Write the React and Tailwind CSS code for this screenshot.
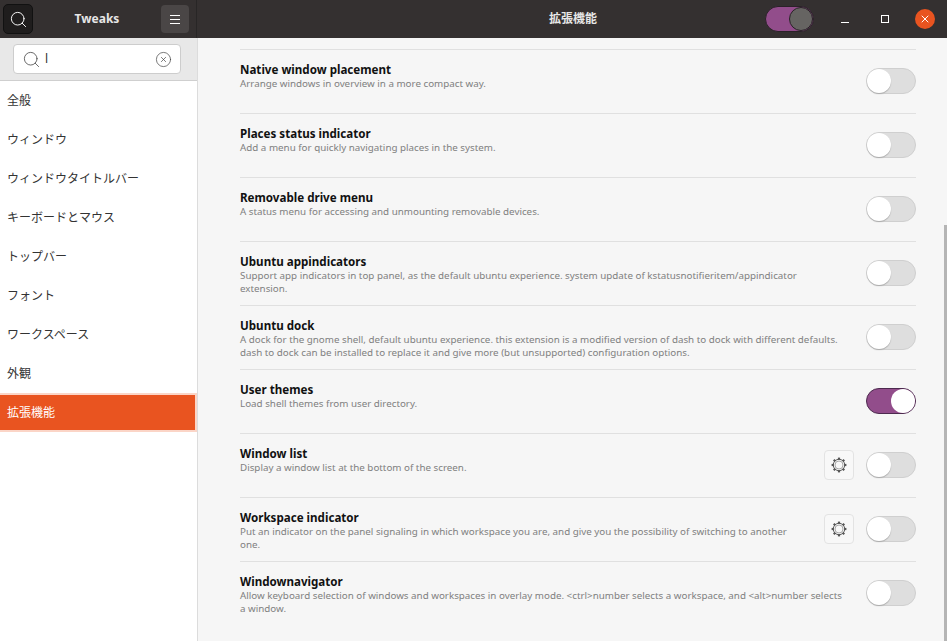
import { Search, CircleX, X } from 'lucide-react'

const navItems = ['全般', 'ウィンドウ', 'ウィンドウタイトルバー', 'キーボードとマウス', 'トップバー', 'フォント', 'ワークスペース', '外観']

const extensions = [
	{ title: 'Native window placement', desc: 'Arrange windows in overview in a more compact way.' },
	{ title: 'Places status indicator', desc: 'Add a menu for quickly navigating places in the system.' },
	{ title: 'Removable drive menu', desc: 'A status menu for accessing and unmounting removable devices.' },
	{
		title: 'Ubuntu appindicators',
		desc: 'Support app indicators in top panel, as the default ubuntu experience. system update of kstatusnotifieritem/appindicator extension.',
	},
	{
		title: 'Ubuntu dock',
		desc: 'A dock for the gnome shell, default ubuntu experience. this extension is a modified version of dash to dock with different defaults. dash to dock can be installed to replace it and give more (but unsupported) configuration options.',
	},
	{ title: 'User themes', desc: 'Load shell themes from user directory.', on: true },
	{ title: 'Window list', desc: 'Display a window list at the bottom of the screen.', gear: true },
	{
		title: 'Workspace indicator',
		desc: 'Put an indicator on the panel signaling in which workspace you are, and give you the possibility of switching to another one.',
		gear: true,
	},
	{
		title: 'Windownavigator',
		desc: 'Allow keyboard selection of windows and workspaces in overlay mode. <ctrl>number selects a workspace, and <alt>number selects a window.',
	},
]

const gearTeeth = [0, 45, 90, 135, 180, 225, 270, 315]

function Toggle({ on }) {
	return (
		<div
			className={`flex h-[26px] w-[50px] shrink-0 rounded-full border ${
				on ? 'justify-end border-[#4d2a4f] bg-[#924d8b]' : 'justify-start border-[#cfcfcf] bg-[#dedede]'
			}`}
		>
			<div className={`h-[24px] w-[24px] rounded-full bg-white ${on ? '' : 'shadow-[0_1px_1px_#aaa]'}`} />
		</div>
	)
}

function GearIcon() {
	return (
		<div className="mr-[12px] flex h-[30px] w-[30px] shrink-0 items-center justify-center rounded-[4px] border border-[#e3e3e3] bg-[#f8f8f8]">
			<svg width="16" height="16" viewBox="0 0 16 16" fill="none">
				{gearTeeth.map((deg) => (
					<rect key={deg} x="6.9" y="0.6" width="2.2" height="2" fill="#555" transform={`rotate(${deg} 8 8)`} />
				))}
				<circle cx="8" cy="8" r="5.7" stroke="#555" strokeWidth="1" />
				<circle cx="8" cy="8" r="4" stroke="#aaa" strokeWidth="1" />
			</svg>
		</div>
	)
}

function ExtensionRow({ item }) {
	return (
		<div className="flex h-[64px] items-center border-t border-[#e0e0e0] pb-[2px]">
			<div className="min-w-0 flex-1 self-start pt-[12px] pr-[24px]">
				<div className="text-[11.6px] leading-[15px] font-bold text-[#111]">{item.title}</div>
				<div className="text-[9.8px] leading-[13px] text-[#808080]">{item.desc}</div>
			</div>
			{item.gear && <GearIcon />}
			<Toggle on={item.on} />
		</div>
	)
}

export default function App() {
	return (
		<div className="flex h-[641px] w-[947px] flex-col overflow-hidden bg-[#f6f6f6] font-['Noto_Sans','Noto_Sans_CJK_JP',sans-serif]">
			<header className="flex h-[38px] shrink-0 bg-[#343030] text-white">
				<div className="flex w-[197px] shrink-0 items-center justify-between border-r border-[#282626] pr-[7px] pl-[3px]">
					<div className="flex h-[30px] w-[30px] items-center justify-center rounded-[5px] border border-[#111] bg-[#1f1d1d]">
						<Search size={19} strokeWidth={1.2} />
					</div>
					<span className="text-[12px] font-bold text-[#e6e6e6]">Tweaks</span>
					<div className="flex h-[28px] w-[28px] flex-col items-center justify-center gap-[3px] rounded-[4px] bg-[#4a4646]">
						<div className="h-[1px] w-[10px] bg-white" />
						<div className="h-[1px] w-[10px] bg-white" />
						<div className="h-[1px] w-[10px] bg-white" />
					</div>
				</div>
				<div className="relative flex flex-1 items-center justify-center pl-[2px]">
					<span className="text-[12px] font-bold text-[#e6e6e6]">拡張機能</span>
					<div className="absolute top-0 right-0 flex h-[38px] items-center">
						<div className="mr-[27px] flex h-[26px] w-[49px] justify-end rounded-full border border-[#2a2228] bg-[#924d8b]">
							<div className="h-[24px] w-[24px] rounded-full border border-[#2a2228] bg-[#666462]" />
						</div>
						<div className="mr-[32px] h-[1px] w-[8px] translate-y-[3px] bg-white" />
						<div className="mr-[26px] h-[8px] w-[8px] border border-white" />
						<div className="mr-[12px] flex h-[20px] w-[20px] items-center justify-center rounded-full bg-[#e95420]">
							<X size={12} strokeWidth={2} />
						</div>
					</div>
				</div>
			</header>
			<div className="flex min-h-0 flex-1">
				<aside className="flex w-[198px] shrink-0 flex-col border-r border-[#dcdcdc] bg-white">
					<div className="flex h-[43px] items-center justify-center border-b border-[#cfcfcf] bg-[#e8e8e8] pr-[3px]">
						<div className="flex h-[30px] w-[168px] items-center rounded-[4px] border border-[#cdcdcd] bg-white pr-[8px] pl-[8px]">
							<Search size={19} strokeWidth={1} className="text-[#444]" />
							<span className="ml-[4px] flex-1 text-[12px] text-[#333]">l</span>
							<CircleX size={17} strokeWidth={1} className="text-[#444]" />
						</div>
					</div>
					<nav className="flex flex-col">
						{navItems.map((label) => (
							<div key={label} className="flex h-[39px] items-center pl-[7px] text-[12px] text-[#333]">
								{label}
							</div>
						))}
						<div className="flex h-[39px] items-center border-y-2 border-r-2 border-[#fbd5c7] bg-[#e95420] pl-[7px] text-[12px] text-white">
							拡張機能
						</div>
					</nav>
				</aside>
				<main className="relative min-w-0 flex-1 overflow-hidden pt-[11px] pr-[31px] pl-[42px]">
					{extensions.map((item) => (
						<ExtensionRow key={item.title} item={item} />
					))}
					<div className="absolute top-[187px] right-0 h-[416px] w-[3px] bg-[#b5b5b5]" />
				</main>
			</div>
		</div>
	)
}
